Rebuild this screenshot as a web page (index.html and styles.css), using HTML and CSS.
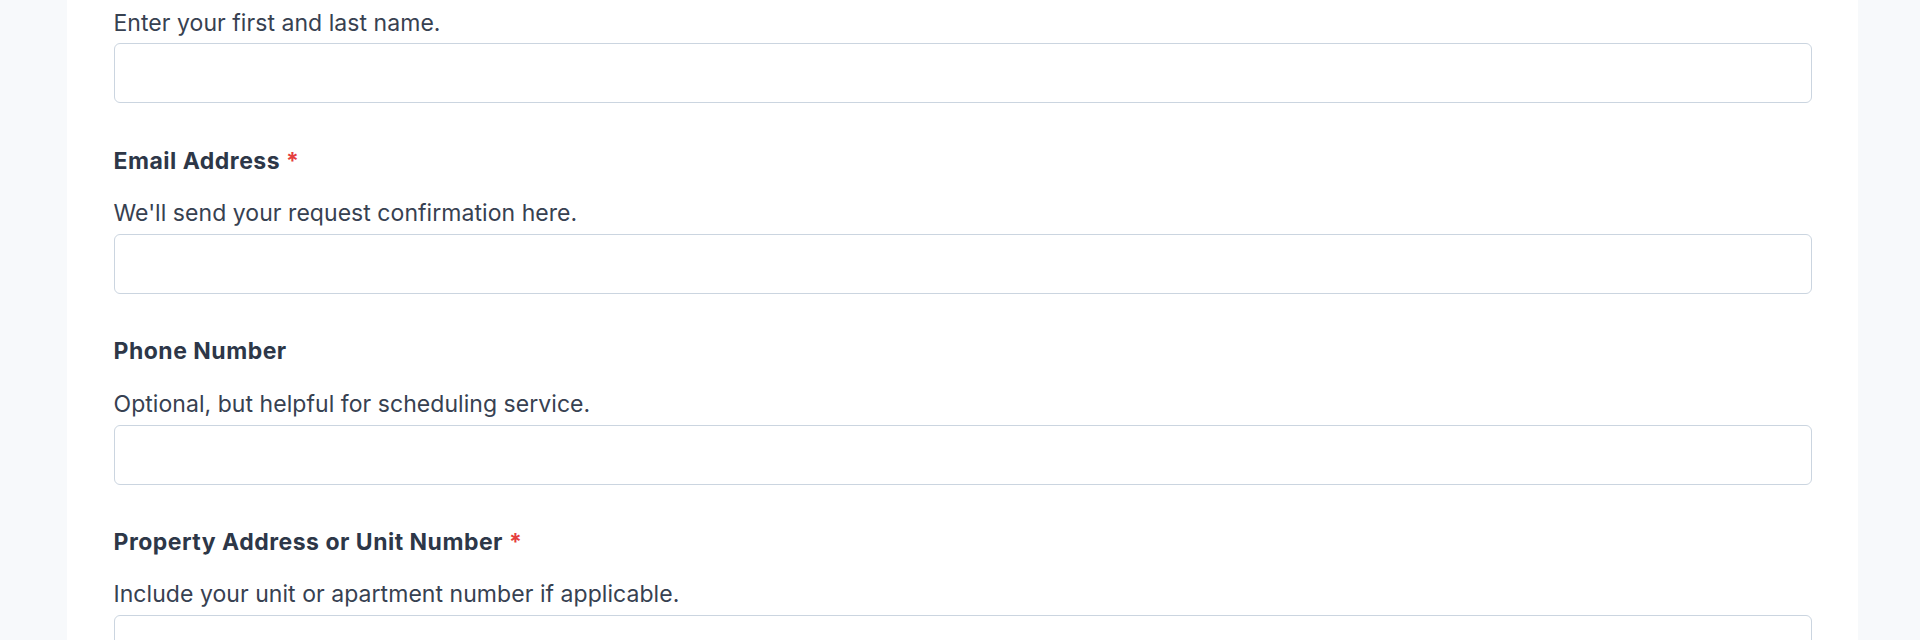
FILE: index.html
```html
<html lang="en">

<head>
    <meta charset="UTF-8">
    <meta name="viewport" content="width=device-width, initial-scale=1.0">
    <title>Service Request</title>
    <link rel="stylesheet" href="styles.css">
</head>

<body>
    <div class="page">
        <form class="card">
            <div class="field">
                <p class="hint">Enter your first and last name.</p>
                <input class="input" type="text" name="name">
            </div>

            <div class="field">
                <label class="label">Email Address <span class="req">*</span></label>
                <p class="hint">We'll send your request confirmation here.</p>
                <input class="input" type="email" name="email">
            </div>

            <div class="field">
                <label class="label">Phone Number</label>
                <p class="hint">Optional, but helpful for scheduling service.</p>
                <input class="input" type="tel" name="phone">
            </div>

            <div class="field">
                <label class="label">Property Address or Unit Number <span class="req">*</span></label>
                <p class="hint">Include your unit or apartment number if applicable.</p>
                <input class="input" type="text" name="address">
            </div>
        </form>
    </div>
</body>
</html>
```

FILE: styles.css
```css
* {
    box-sizing: border-box;
}

body {
    margin: 0;
    background-color: #f7f9fb;
    font-family: Inter, "Liberation Sans", sans-serif;
    color: #2d3748;
}

.page {
    padding: 0 62px 0 67px;
}

.card {
    background-color: #fff;
    padding: 6.5px 46.5px 40px;
    min-height: 640px;
}

.field {
    margin-bottom: 42.5px;
}

.label {
    display: block;
    font-size: 23px;
    line-height: 30px;
    font-weight: 700;
    letter-spacing: 0.5px;
    color: #2d3748;
    margin-bottom: 21.4px;
}

.req {
    color: #e53e3e;
}

.hint {
    margin: 0 0 3px;
    font-size: 23px;
    line-height: 33.75px;
    letter-spacing: 0.05px;
    color: #374151;
}

.input {
    display: block;
    width: 100%;
    height: 60px;
    border: 1px solid #cbd5e0;
    border-radius: 6px;
    background-color: #fff;
    font: inherit;
    font-size: 22.5px;
    padding: 0 18px;
    outline: none;
}
```
